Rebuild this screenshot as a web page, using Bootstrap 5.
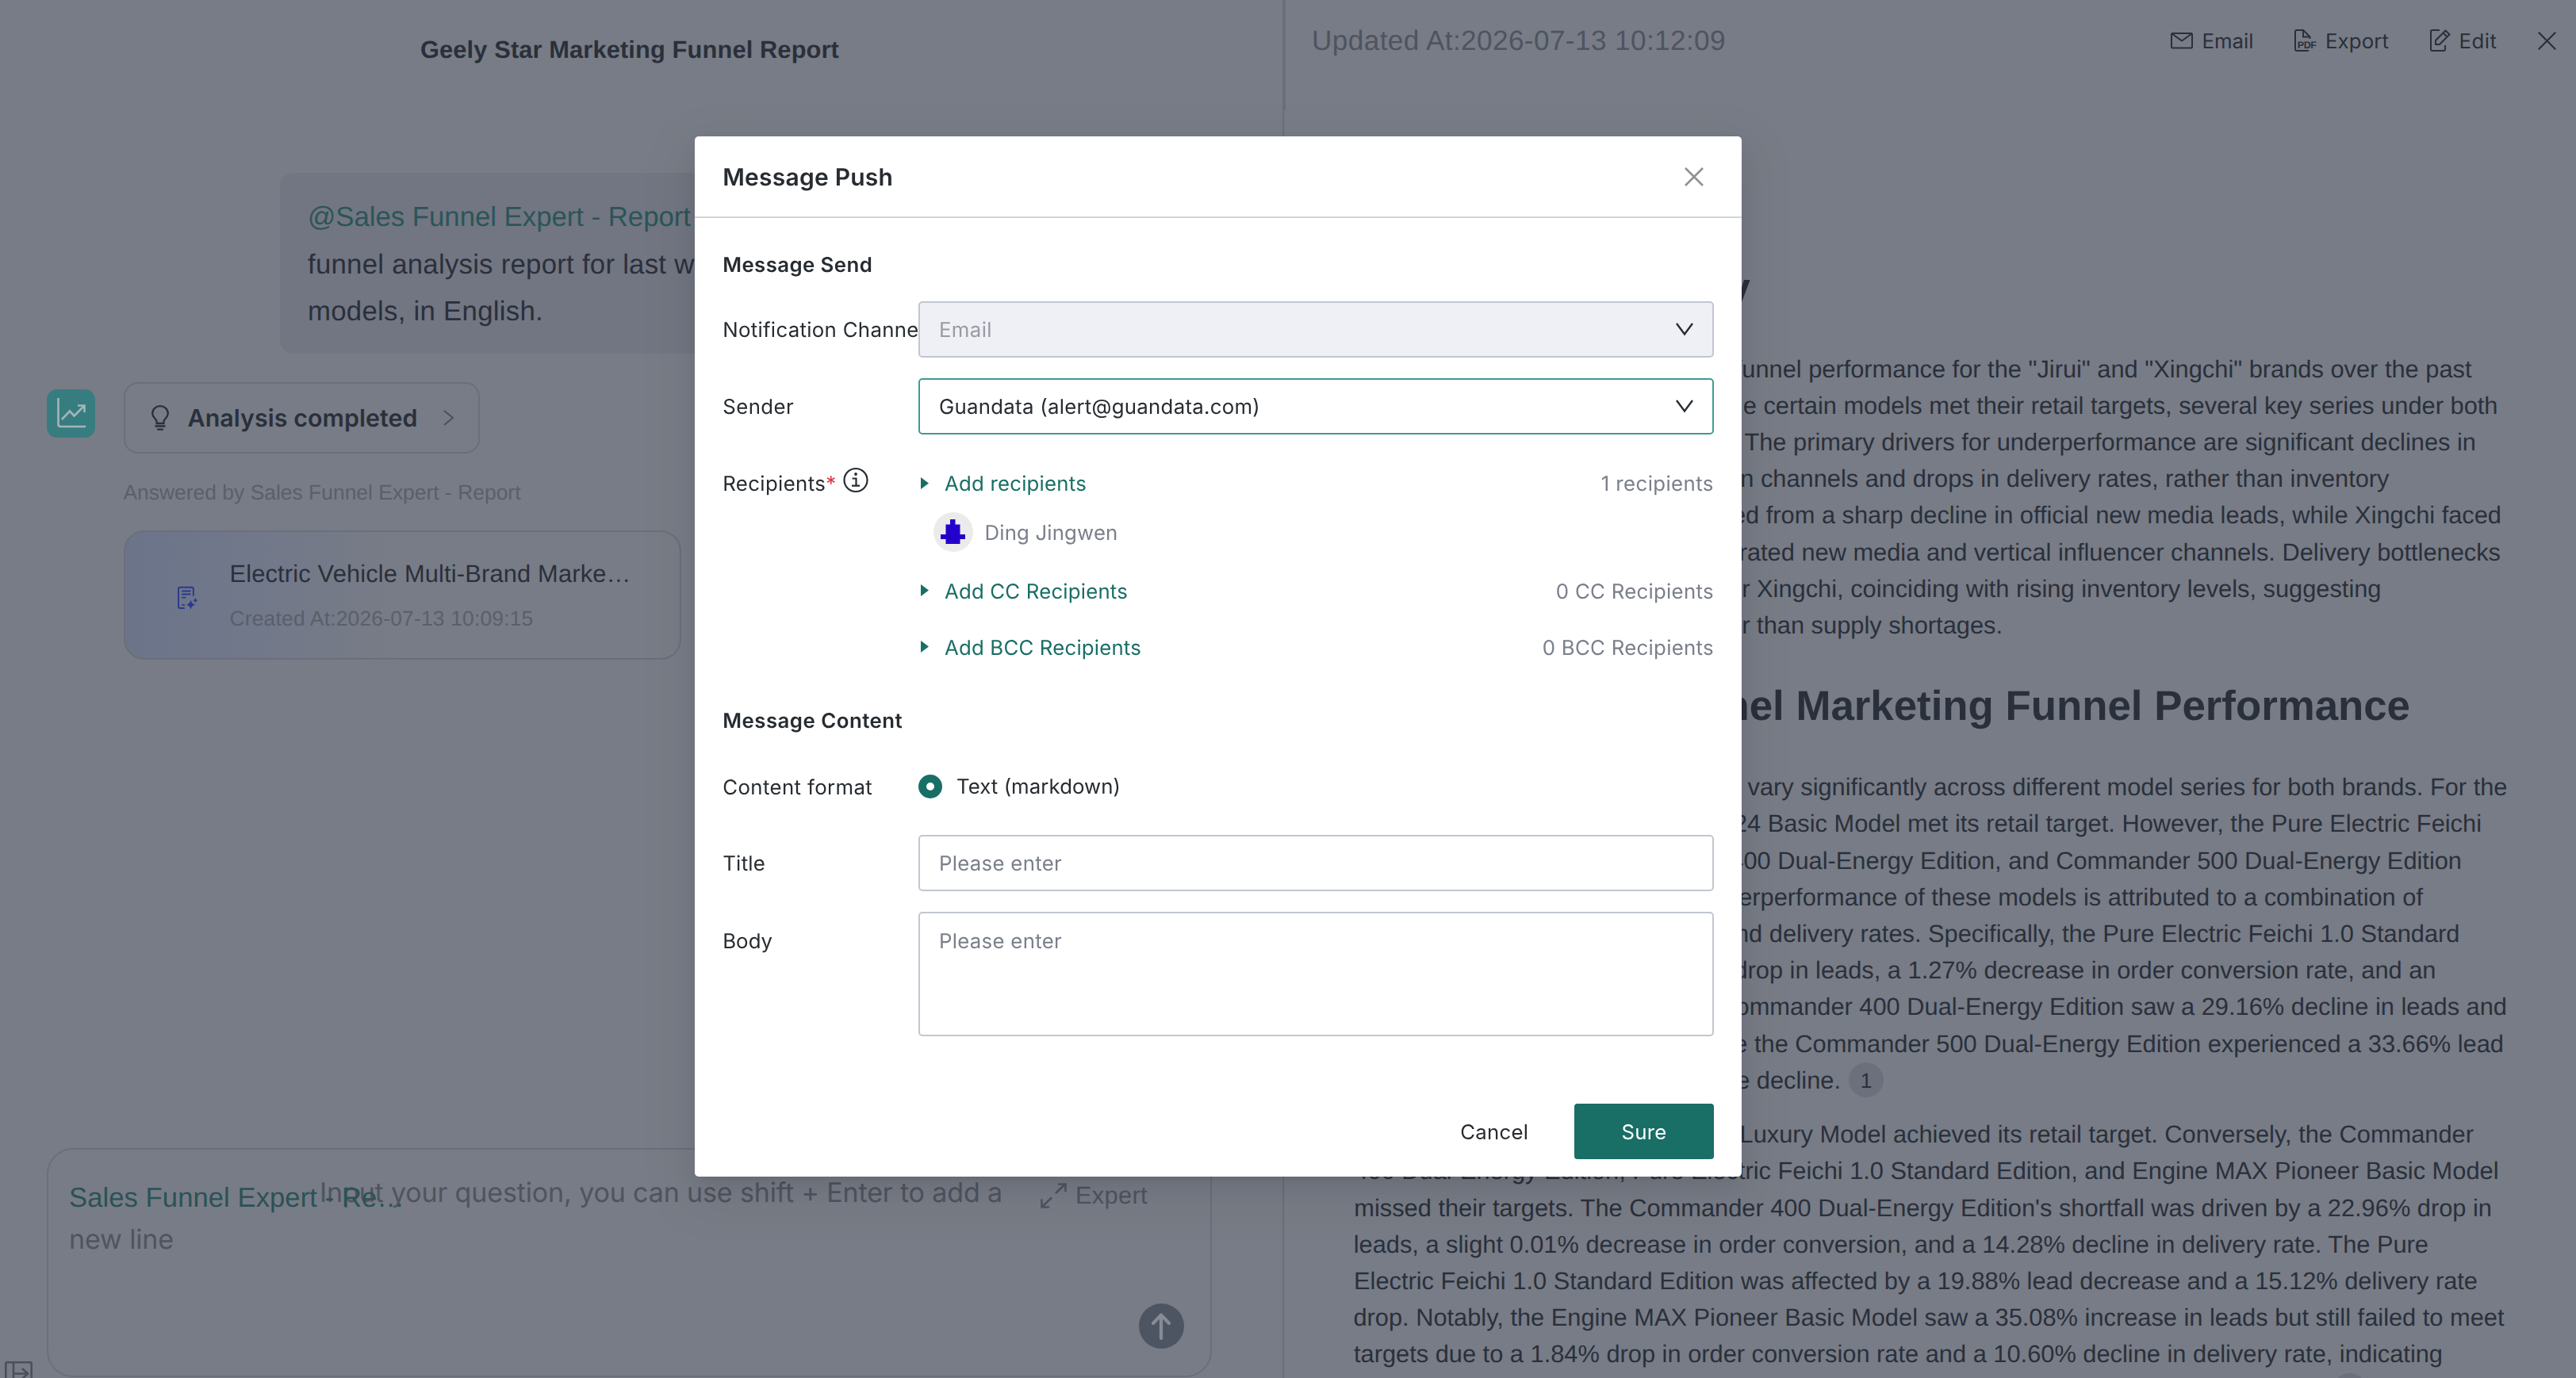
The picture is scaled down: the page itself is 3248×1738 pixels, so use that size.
<!DOCTYPE html>
<html lang="en">
<head>
<meta charset="utf-8">
<meta name="viewport" content="width=device-width, initial-scale=1">
<title>Geely Star Marketing Funnel Report</title>
<link href="https://cdn.jsdelivr.net/npm/bootstrap@5.3.0/dist/css/bootstrap.min.css" rel="stylesheet">
<style>
  :root { --ink:#2a303b; --dim:#4e5460; --pane:#787c86; --rule:#6a6f7b; --teal:#196e66; --soft:#7a7f8b; --field:#c1c7d0; }
  html, body { height:1738px; overflow:hidden; }
  body { background:var(--pane); color:var(--ink); font-family:"Liberation Sans",Arial,sans-serif; text-rendering:geometricPrecision; }
  .ui { font-family:Inter,"Liberation Sans",sans-serif; }
  .app { height:1738px; }
  svg { display:block; flex:none; overflow:visible; }
  [data-w] { display:inline-block; white-space:nowrap; text-indent:0; }

  /* chat pane */
  .chat { width:1617px; flex:none; }
  .chat-title { font-size:30.8px; line-height:46px; padding:39.8px 0 0 530px; height:217.8px; }
  .bubble { margin-left:353px; width:1174px; height:228.7px; border-radius:17px; background:#727682; padding:26.3px 35px 0 35px; font-size:34.8px; line-height:59.5px; }
  .mention { color:#2b5558; }
  .answer { margin:35.2px 0 0 59px; }
  .bot { width:61px; height:61px; border-radius:13px; background:#377d80; margin-top:9px; }
  .done { margin-left:35.5px; width:449px; height:90px; border:2px solid var(--rule); border-radius:18px; padding-left:33px; font-size:30.4px; }
  .by { margin:29.5px 0 0 155.5px; font-size:26.4px; line-height:40px; color:#5a5f6b; }
  .report-card { margin:27.4px 0 0 155.5px; width:703.5px; height:163px; border:2px solid var(--rule); border-radius:26px; background:linear-gradient(90deg,#6c748a 0,#71788a 22%,var(--pane) 50%); padding:30.5px 0 0 63px; }
  .report-text { padding-left:38px; }
  .report-name { font-size:30.8px; line-height:46px; }
  .report-time { font-size:26.4px; line-height:40px; margin-top:13.3px; color:#5a5f6b; }
  .ask { margin:auto 0 1px 59px; width:1468.5px; height:289.5px; border:2px solid var(--rule); border-radius:33px; padding:25.5px 0 0 26px; }
  .hint { font-size:34px; line-height:59px; color:#4f5460; text-indent:316px; white-space:nowrap; }
  .hint-rest { text-indent:0; }
  .picked { left:26px; top:32px; font-size:34.6px; line-height:59px; color:#2b5256; }
  .expert { left:1251px; top:35.5px; gap:11px; font-size:30.8px; line-height:46px; color:#4f5460; }
  .expert svg { margin-top:7px; }
  .send { right:33px; bottom:34px; width:57px; height:57px; background:#4e5562; }
  .rail { left:6px; bottom:-12px; }

  /* report pane */
  .doc-pane { border-left:2px solid var(--rule); }
  .doc-head { height:139px; border-left:2px solid var(--rule); padding:27.500px 25px 0 33px; }
  .stamp { font-size:35.2px; line-height:48px; color:var(--dim); }
  .tool { font-size:25.8px; line-height:40px; gap:11px; margin-right:51.500px; }
  .tool span { padding-top:5.500px; }
  .doc-body { width:1550px; padding-top:192.700px; }
  .rl { font-size:30.8px; line-height:46.2px; height:46.2px; white-space:nowrap; display:flex; justify-content:flex-end; }
  .doc-body h2.rl { font-size:52.8px; line-height:64px; height:64px; font-weight:700; margin:0 0 47px; }
  .gap-head { height:47px; }
  .gap-para { height:22.4px; }
  .ref { width:44px; height:44px; border-radius:50%; background:#6b707c; font-size:26.4px; line-height:46px; text-align:center; margin-left:10px; }

  /* dialog */
  .modal-dialog { max-width:none; width:1320px; margin:172px 0 0 876px; }
  .modal-content { height:1312px; border:0; border-radius:5px; color:#272c31; box-shadow:0 13px 35px rgba(0,0,0,.08), 0 7px 13px -9px rgba(0,0,0,.12), 0 20px 62px 18px rgba(0,0,0,.05); font-size:25.8px; }
  .modal-header { height:103px; border-bottom:2px solid #d0d5dd; padding:0 47.7px 0 35.2px; border-radius:0; }
  .modal-title { font-size:30px; line-height:46px; font-weight:600; }
  .modal-body { padding:37.6px 35.2px 0; }
  .modal-body [data-w], .modal-body .text-danger, .modal-footer [data-w], .done [data-w] { transform:translateY(1.5px); }
  .modal-title [data-w] { transform:translateY(.6px); }
  .sec { line-height:40px; font-weight:600; }
  .lab { width:246.8px; flex:none; overflow:hidden; white-space:nowrap; line-height:40px; }
  .box { height:70.6px; border:2px solid var(--field); border-radius:5px; padding:0 24px 0 24px; }
  .box.off { background:#eff0f5; color:#979ba4; }
  .box.on { border-color:#3f9b93; }
  .box-tall { height:157px; padding-top:14.5px; line-height:40px; }
  .link-teal { color:var(--teal); gap:19.5px; line-height:40px; padding-left:3.5px; }
  .soft { color:var(--soft); line-height:40px; }
  .face { width:50px; height:50px; background:#ebebeb; }
  .dot { width:30px; height:30px; border:10px solid var(--teal); border-radius:50%; }
  .modal-footer { padding:0 35.2px 22px; border:0; margin-top:auto; gap:0; }
  .modal-footer .btn { font-size:25.8px; margin:0; border-radius:4px; height:70.4px; border:0; color:#272c31; }
  .modal-footer .btn-sure { width:175.6px; background:var(--teal); color:#fff; }
</style>
<script src="https://cdn.jsdelivr.net/npm/bootstrap@5.3.0/dist/js/bootstrap.bundle.min.js"></script>
</head>
<body>
<div class="app d-flex">
  <section class="chat d-flex flex-column position-relative">
    <div class="chat-title fw-bold"><span data-w="528">Geely Star Marketing Funnel Report</span></div>
    <div class="bubble">
      <div><span class="mention" data-w="483">@Sales Funnel Expert - Report</span></div>
      <div class="text-nowrap"><span data-w="487.500">funnel analysis report for last w</span><span>eek</span></div>
      <div><span data-w="297">models, in English.</span></div>
    </div>
    <div class="answer d-flex">
      <div class="bot d-flex align-items-center justify-content-center">
        <svg width="36" height="38" viewBox="0 0 36 38" fill="none" stroke="#a3b4ba" stroke-width="2.6"><path d="M1.5 0V33q0 3 3 3H36"/><path d="M6 27L16 16.5L21.500 22.500L34 10M26 9.500H34.500V18"/></svg>
      </div>
      <div class="done d-flex align-items-center ui fw-semibold">
        <svg width="22" height="32" viewBox="0 0 22 32" fill="none" stroke="#2a303b" stroke-width="2.300"><path d="M6.500 23V20.500C6.500 17.500 1.200 16 1.200 10.500A9.800 9.300 0 0 1 20.800 10.500C20.800 16 15.500 17.500 15.500 20.500V23ZM4.500 26.500H17.500M7 30.700H15"/></svg>
        <span class="ms-4" data-w="290">Analysis completed</span>
        <svg class="ms-auto" style="margin-right:31px" width="13" height="20" viewBox="0 0 13 20" fill="none" stroke="#4a505c" stroke-width="2"><path d="M1 1L12 10L1 19"/></svg>
      </div>
    </div>
    <div class="by"><span data-w="501">Answered by Sales Funnel Expert - Report</span></div>
    <div class="report-card d-flex">
      <svg class="mt-4 pt-2" width="31" height="44" viewBox="0 -8 31 44" fill="none" stroke="#293a8e" stroke-width="2.400"><path d="M11 33.500H4Q1.500 33.500 1.500 31V4Q1.500 1.500 4 1.500H22Q24.500 1.500 24.500 4V15M6.500 7.200H20.500M6.500 12.200H20.500M6.500 17.200H13M6.500 28.800H11"/><path d="M20.500 20.500Q21.500 27 27.500 28.500Q21.500 29.800 20.500 36Q19.300 29.800 13.500 28.500Q19.300 27 20.500 20.500ZM27.500 17.500Q28 21 31 21.500Q28 22 27.500 25.500Q27 22 24 21.500Q27 21 27.500 17.500Z" fill="#293a8e" stroke="none"/></svg>
      <div class="report-text">
        <div class="report-name"><span data-w="506">Electric Vehicle Multi-Brand Marke…</span></div>
        <div class="report-time"><span data-w="383">Created At:2026-07-13 10:09:15</span></div>
      </div>
    </div>
    <div class="ask position-relative">
      <div class="hint ui"><span data-w="861">Input your question, you can use shift + Enter to add a</span></div>
      <div class="hint hint-rest ui"><span data-w="132">new line</span></div>
      <div class="picked position-absolute"><span data-w="423">Sales Funnel Expert - Re…</span></div>
      <div class="expert position-absolute d-flex">
        <svg width="33" height="32" viewBox="0 0 33 32" fill="none" stroke="#4f5460" stroke-width="2.600"><path d="M19 13L31 1.500M22 1.500H31.500V11M14 18.500L2 30M1.500 20.500V30.500H11"/></svg>
        <span data-w="91">Expert</span>
      </div>
      <div class="send position-absolute rounded-circle d-flex align-items-center justify-content-center">
        <svg width="26" height="34" viewBox="0 0 26 34" fill="none" stroke="#878b95" stroke-width="4.200" stroke-linecap="round" stroke-linejoin="round"><path d="M13 32V3M3 13L13 2.500L23 13"/></svg>
      </div>
    </div>
    <svg class="rail position-absolute" width="35" height="33" viewBox="0 0 35 33" fill="none" stroke="#4a4f5b" stroke-width="2.600"><rect x="1.300" y="1.300" width="32.400" height="30" rx="1.500"/><path d="M11 1V32M11 15.500H29M22 9L29 15.500L22 22"/></svg>
  </section>

  <section class="doc-pane flex-grow-1">
    <header class="doc-head d-flex">
      <div class="stamp"><span data-w="522">Updated At:2026-07-13 10:12:09</span></div>
      <div class="ms-auto d-flex ui">
        <div class="tool d-flex">
          <svg width="28" height="21" viewBox="0 0 28 21" style="margin-top:13px" fill="none" stroke="#2a303b" stroke-width="2"><rect x="1" y="1" width="26" height="18.500" rx="1.500"/><path d="M1.500 1.500L14 10.500L26.500 1.500"/></svg>
          <span data-w="65">Email</span>
        </div>
        <div class="tool d-flex">
          <svg width="28" height="28" viewBox="0 0 28 28" style="margin-top:9px" fill="none" stroke="#2a303b" stroke-width="2"><path d="M18 27H3Q1 27 1 25V3Q1 1 3 1H11L19.500 9.500V12M11 1V9.500H19"/><text x="3.800" y="23.500" font-size="12.500" font-weight="700" font-family="Liberation Sans" fill="#2a303b" stroke="none" textLength="24">PDF</text></svg>
          <span data-w="80">Export</span>
        </div>
        <div class="tool d-flex">
          <svg width="26" height="28" viewBox="0 0 26 28" style="margin-top:9px" fill="none" stroke="#2a303b" stroke-width="2" stroke-linejoin="round"><path d="M12 1H3Q1 1 1 3V25Q1 27 3 27H17Q19 27 19 25V20"/><path d="M7 19V14L19.500 1.500L24.500 6.500L12 19ZM16.500 4.500L21.500 9.500"/></svg>
          <span data-w="48">Edit</span>
        </div>
        <svg width="23" height="23" viewBox="0 0 23 23" style="margin-top:12px" fill="none" stroke="#2a303b" stroke-width="2.200"><path d="M.8 .8L22.200 22.200M22.200 .8L.8 22.200"/></svg>
      </div>
    </header>
    <article class="doc-body">
      <h2 class="rl" data-end="2207">Executive Summary</h2>
      <div class="rl" data-end="3116.500">funnel performance for the "Jirui" and "Xingchi" brands over the past</div>
      <div class="rl" data-end="3149.500">While certain models met their retail targets, several key series under both</div>
      <div class="rl" data-end="3122">The primary drivers for underperformance are significant declines in</div>
      <div class="rl" data-end="3012.500">in channels and drops in delivery rates, rather than inventory</div>
      <div class="rl" data-end="3154">suffered from a sharp decline in official new media leads, while Xingchi faced</div>
      <div class="rl" data-end="3153">integrated new media and vertical influencer channels. Delivery bottlenecks</div>
      <div class="rl" data-end="3002.500">for Xingchi, coinciding with rising inventory levels, suggesting</div>
      <div class="rl" data-end="2525">rather than supply shortages.</div>
      <div class="gap-head"></div>
      <h2 class="rl" data-end="3039">Channel Marketing Funnel Performance</h2>
      <div class="rl" data-end="3161.500">vary significantly across different model series for both brands. For the</div>
      <div class="rl" data-end="3129">2024 Basic Model met its retail target. However, the Pure Electric Feichi</div>
      <div class="rl" data-end="3104">Commander 400 Dual-Energy Edition, and Commander 500 Dual-Energy Edition</div>
      <div class="rl" data-end="3055">underperformance of these models is attributed to a combination of</div>
      <div class="rl" data-end="3101.500">and delivery rates. Specifically, the Pure Electric Feichi 1.0 Standard</div>
      <div class="rl" data-end="3071.500">drop in leads, a 1.27% decrease in order conversion rate, and an</div>
      <div class="rl" data-end="3161">Commander 400 Dual-Energy Edition saw a 29.16% decline in leads and</div>
      <div class="rl" data-end="3157">while the Commander 500 Dual-Energy Edition experienced a 33.66% lead</div>
      <div class="rl" data-end="2375">rate decline.<span class="ref">1</span></div>
      <div class="gap-para"></div>
      <div class="rl" data-end="3119">Luxury Model achieved its retail target. Conversely, the Commander</div>
      <div class="rl" data-end="3150.500">400 Dual-Energy Edition, Pure Electric Feichi 1.0 Standard Edition, and Engine MAX Pioneer Basic Model</div>
      <div class="rl" data-end="3142">missed their targets. The Commander 400 Dual-Energy Edition's shortfall was driven by a 22.96% drop in</div>
      <div class="rl" data-end="3062">leads, a slight 0.01% decrease in order conversion, and a 14.28% decline in delivery rate. The Pure</div>
      <div class="rl" data-end="3124">Electric Feichi 1.0 Standard Edition was affected by a 19.88% lead decrease and a 15.12% delivery rate</div>
      <div class="rl" data-end="3157.500">drop. Notably, the Engine MAX Pioneer Basic Model saw a 35.08% increase in leads but still failed to meet</div>
      <div class="rl" data-end="3080">targets due to a 1.84% drop in order conversion rate and a 10.60% decline in delivery rate, indicating</div>
      <div class="rl" data-end="2985"><span class="ref"></span></div>
    </article>
  </section>
</div>

<div class="modal d-block overflow-hidden ui" tabindex="-1" role="dialog">
  <div class="modal-dialog">
    <div class="modal-content">
      <div class="modal-header">
        <h5 class="modal-title"><span data-w="215">Message Push</span></h5>
        <svg width="24" height="24" viewBox="0 0 24 24" fill="none" stroke="#8f9195" stroke-width="2.600"><path d="M1 1L23 23M23 1L1 23"/></svg>
      </div>
      <div class="modal-body">
        <div class="sec"><span data-w="189">Message Send</span></div>
        <div class="d-flex align-items-center" style="margin-top:27.500px">
          <div class="lab"><span data-w="254">Notification Channel</span></div>
          <div class="box off flex-grow-1 d-flex align-items-center justify-content-between"><span data-w="67">Email</span>
            <svg width="22" height="17" viewBox="0 0 22 17" fill="none" stroke="#272c31" stroke-width="2.400"><path d="M1 1L11 14.500L21 1"/></svg></div>
        </div>
        <div class="d-flex align-items-center" style="margin-top:26.300px">
          <div class="lab"><span data-w="90">Sender</span></div>
          <div class="box on flex-grow-1 d-flex align-items-center justify-content-between"><span data-w="405">Guandata (alert@guandata.com)</span>
            <svg width="22" height="17" viewBox="0 0 22 17" fill="none" stroke="#272c31" stroke-width="2.400"><path d="M1 1L11 14.500L21 1"/></svg></div>
        </div>
        <div class="d-flex" style="margin-top:41.800px">
          <div class="lab d-flex"><span data-w="130">Recipients</span><span class="text-danger">*</span>
            <svg class="ms-2" width="32" height="32" viewBox="0 0 32 32" fill="none" stroke="#272c31" stroke-width="2.200"><circle cx="17" cy="16.500" r="14.500"/><path d="M12.500 14.500H17.500V23.500M12 23.700H22"/><circle cx="17" cy="9" r="1.900" fill="#272c31" stroke="none"/></svg>
          </div>
          <div class="flex-grow-1">
            <div class="d-flex justify-content-between">
              <div class="link-teal d-flex align-items-center"><svg width="10" height="15" viewBox="0 0 10 15"><path d="M0 0L10 7.500L0 15Z" fill="#196e66"/></svg><span data-w="179">Add recipients</span></div>
              <span class="soft" data-w="142">1 recipients</span>
            </div>
            <div class="d-flex align-items-center" style="margin-top:16.300px;padding-left:19px">
              <div class="face rounded-circle d-flex align-items-center justify-content-center"><svg width="31" height="31" viewBox="0 0 31 31"><path d="M12 0H18.500V6.500H24.500V19H31V25H24.500V31H6.500V25H0V19H6.500V6.500H12Z" fill="#2400cd"/></svg></div>
              <span class="soft" style="margin-left:14.500px" data-w="168">Ding Jingwen</span>
            </div>
            <div class="d-flex justify-content-between" style="margin-top:29.200px">
              <div class="link-teal d-flex align-items-center"><svg width="10" height="15" viewBox="0 0 10 15"><path d="M0 0L10 7.500L0 15Z" fill="#196e66"/></svg><span data-w="231">Add CC Recipients</span></div>
              <span class="soft" data-w="199">0 CC Recipients</span>
            </div>
            <div class="d-flex justify-content-between" style="margin-top:31px">
              <div class="link-teal d-flex align-items-center"><svg width="10" height="15" viewBox="0 0 10 15"><path d="M0 0L10 7.500L0 15Z" fill="#196e66"/></svg><span data-w="248">Add BCC Recipients</span></div>
              <span class="soft" data-w="216">0 BCC Recipients</span>
            </div>
          </div>
        </div>
        <div class="sec" style="margin-top:52px"><span data-w="227">Message Content</span></div>
        <div class="d-flex align-items-center" style="margin-top:43.700px">
          <div class="lab"><span data-w="189">Content format</span></div>
          <div class="dot"></div><span style="margin-left:18px" data-w="207">Text (markdown)</span>
        </div>
        <div class="d-flex align-items-center" style="margin-top:41.500px">
          <div class="lab"><span data-w="54">Title</span></div>
          <div class="box flex-grow-1 d-flex align-items-center soft"><span data-w="155">Please enter</span></div>
        </div>
        <div class="d-flex" style="margin-top:26.300px">
          <div class="lab pt-3"><span data-w="63">Body</span></div>
          <div class="box box-tall flex-grow-1 soft"><span data-w="155">Please enter</span></div>
        </div>
      </div>
      <div class="modal-footer">
        <button class="btn" style="margin-right:46px"><span data-w="86">Cancel</span></button>
        <button class="btn btn-sure"><span data-w="57">Sure</span></button>
      </div>
    </div>
  </div>
</div>
<script>
  // Track each label to its set width
  document.querySelectorAll('[data-w]').forEach(el => {
    const w = parseFloat(el.dataset.w), r = document.createRange();
    r.selectNodeContents(el);
    el.style.letterSpacing = ((w - r.getBoundingClientRect().width) / el.textContent.length).toFixed(3) + 'px';
  });
  // Ragged right edge of the report text
  document.querySelectorAll('.rl').forEach(el => {
    el.style.paddingRight = (el.getBoundingClientRect().right - parseFloat(el.dataset.end)) + 'px';
  });
</script>
</body>
</html>
